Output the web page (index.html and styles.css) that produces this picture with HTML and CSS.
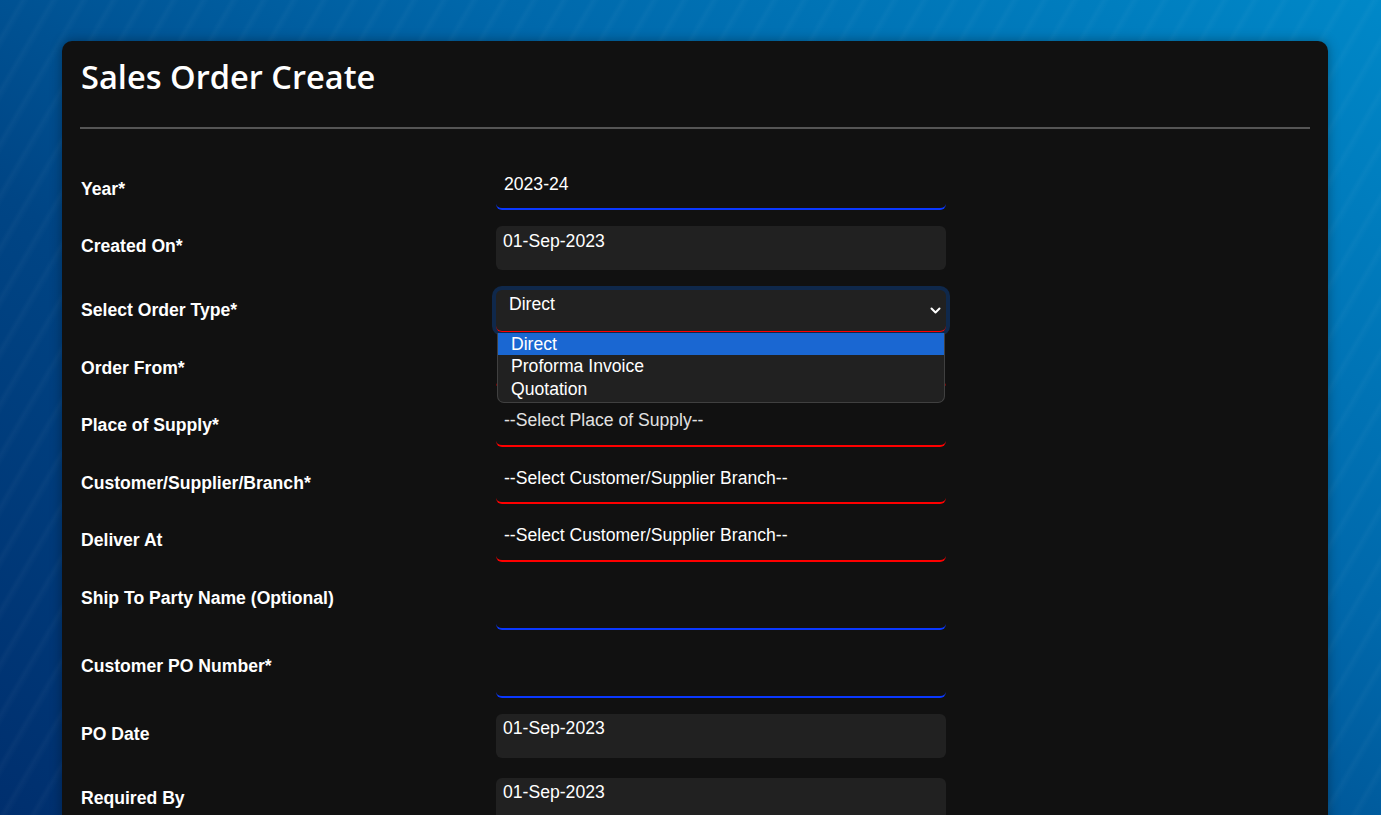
FILE: index.html
```html
<!DOCTYPE html>
<html lang="en">
<head>
<meta charset="utf-8">
<title>Sales Order Create</title>
<link rel="stylesheet" href="styles.css">
</head>
<body>
<main class="page">
  <section class="card">
    <h1 class="title">Sales Order Create</h1>
    <hr class="divider">
    <form class="form">
      <div class="row">
        <label class="label label--flat">Year*</label>
        <div class="field field--line field--blue field--year">2023-24</div>
      </div>
      <div class="row row--date">
        <label class="label label--date">Created On*</label>
        <div class="field field--date">01-Sep-2023</div>
      </div>
      <div class="row">
        <label class="label">Select Order Type*</label>
        <div class="select-wrap">
          <div class="field field--select field--focus">
            <span>Direct</span>
            <svg class="chevron" width="11" height="8" viewBox="0 0 11 8"><polyline points="1.5,1.5 5.5,5.5 9.5,1.5" fill="none" stroke="#ffffff" stroke-width="2" stroke-linecap="round" stroke-linejoin="round"/></svg>
          </div>
          <ul class="dropdown">
            <li class="option option--active">Direct</li>
            <li class="option">Proforma Invoice</li>
            <li class="option">Quotation</li>
          </ul>
        </div>
      </div>
      <div class="row">
        <label class="label">Order From*</label>
        <div class="field field--line field--red field--choice"></div>
      </div>
      <div class="row">
        <label class="label">Place of Supply*</label>
        <div class="field field--line field--red field--choice field--muted">--Select Place of Supply--</div>
      </div>
      <div class="row">
        <label class="label">Customer/Supplier/Branch*</label>
        <div class="field field--line field--red field--choice">--Select Customer/Supplier Branch--</div>
      </div>
      <div class="row">
        <label class="label">Deliver At</label>
        <div class="field field--line field--red field--choice">--Select Customer/Supplier Branch--</div>
      </div>
      <div class="row row--text">
        <label class="label label--text">Ship To Party Name (Optional)</label>
        <div class="field field--line field--blue field--text"></div>
      </div>
      <div class="row row--text">
        <label class="label label--text">Customer PO Number*</label>
        <div class="field field--line field--blue field--text"></div>
      </div>
      <div class="row row--date">
        <label class="label label--date">PO Date</label>
        <div class="field field--date field--date-low">01-Sep-2023</div>
      </div>
      <div class="row row--date">
        <label class="label label--date">Required By</label>
        <div class="field field--date field--date-low">01-Sep-2023</div>
      </div>
    </form>
  </section>
</main>
</body>
</html>
```
FILE: styles.css
```css
html, body {
  margin: 0;
  height: 100%;
  overflow: hidden;
}

body {
  font-family: "Liberation Sans", Arial, sans-serif;
  font-size: 17.6px;
  color: #ffffff;
  background-color: #0060a0;
  background-image:
    repeating-linear-gradient(120deg, rgba(255,255,255,0) 0px, rgba(255,255,255,0) 16px, rgba(255,255,255,0.028) 20px, rgba(255,255,255,0) 26px),
    linear-gradient(35deg, #002f6e 0%, #004585 35%, #0068ab 65%, #0088c8 100%);
}

.page {
  padding: 41px 53px 0 62px;
}

.card {
  background: #111111;
  border-radius: 10px;
  padding: 0 18px 40px 18px;
  box-shadow: 0 0 12px rgba(0, 0, 0, 0.35);
  min-height: 900px;
}

.title {
  margin: 0;
  padding-top: 16px;
  padding-left: 1px;
  font-family: "Open Sans", "Noto Sans", sans-serif;
  font-weight: 600;
  font-size: 32.6px;
  line-height: 40px;
  letter-spacing: 0;
}

.divider {
  margin: 30px 0 0 0;
  border: none;
  height: 2px;
  background: #555555;
}

.form {
  display: flex;
  flex-direction: column;
  gap: 16px;
  padding-top: 37px;
}

.row {
  display: flex;
  align-items: center;
}

.row--date {
  padding-bottom: 4px;
}

.row--text {
  margin-top: -2px;
}

.label {
  flex: none;
  box-sizing: border-box;
  width: 416px;
  padding-left: 1px;
  font-weight: bold;
  line-height: 20px;
  margin-bottom: 1px;
}

.label--flat {
  margin-bottom: -2px;
}

.label--date {
  margin-bottom: 4px;
}

.label--text {
  margin-bottom: 10px;
}

.field {
  box-sizing: border-box;
  width: 450px;
  flex: none;
  line-height: 20px;
  color: #ffffff;
  white-space: nowrap;
}

.field--line {
  background: transparent;
  border-bottom: 2px solid;
  border-radius: 6px;
}

.field--blue {
  border-bottom-color: #0a38ff;
}

.field--red {
  border-bottom-color: #ff0000;
}

.field--year {
  height: 44px;
  padding: 8px 8px 0 8px;
}

.field--text {
  height: 54px;
}

.field--choice {
  height: 41.5px;
  padding: 5px 8px 0 8px;
}

.field--muted {
  color: #e2e2e2;
}

.field--date {
  height: 44px;
  padding: 5px 7px 0 7px;
  background: #212121;
  border-radius: 6px;
}

.field--date-low {
  padding-top: 4px;
}

.select-wrap {
  position: relative;
  width: 450px;
  flex: none;
}

.field--select {
  display: flex;
  justify-content: space-between;
  height: 41.5px;
  padding: 4px 5px 0 13px;
  background: #212121;
  border-bottom: 1.5px solid #ff0000;
  border-radius: 6px;
}

.field--focus {
  box-shadow: 0 0 0 4px rgba(13, 110, 253, 0.25);
}

.chevron {
  margin-top: 13px;
}

.dropdown {
  position: absolute;
  z-index: 5;
  top: 42.5px;
  left: 1px;
  right: 1px;
  margin: 0;
  padding: 0 0 2px 0;
  list-style: none;
  background: #212121;
  border: 1px solid #404040;
  border-top: none;
  border-radius: 0 0 7px 7px;
  font-size: 17.6px;
}

.option {
  height: 22.5px;
  line-height: 22px;
  padding-left: 13px;
  color: #ffffff;
}

.option--active {
  background: #1a67d2;
}
```
